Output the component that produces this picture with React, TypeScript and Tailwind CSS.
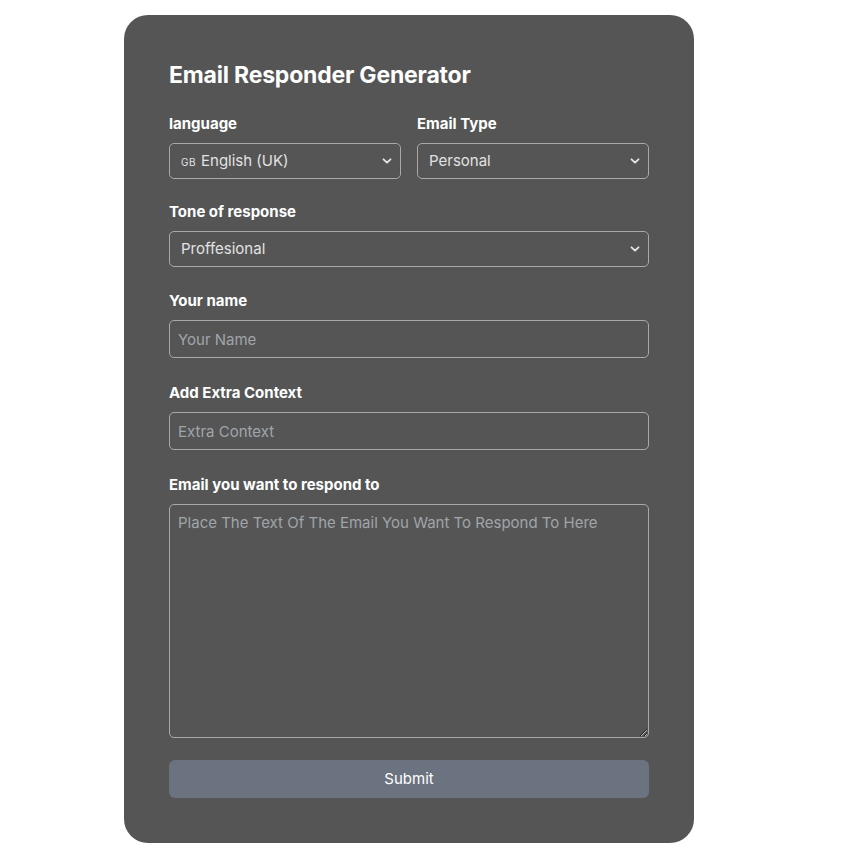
import React from "react";

const Chevron = () => (
  <svg className="pointer-events-none absolute right-[9px] top-1/2 -translate-y-1/2" width="10" height="7" viewBox="0 0 10 7" fill="none">
    <path d="M1.5 1.8 L5 5.2 L8.5 1.8" stroke="#e5e5e5" strokeWidth="1.8" strokeLinecap="round" strokeLinejoin="round" />
  </svg>
);

const labelCls = "block text-[15px] leading-5 font-bold text-white mb-[9px]";
const selectCls =
  "w-full h-9 appearance-none rounded-[5px] border border-[#a9a9a9] bg-[#555555] pl-[11px] pr-8 text-[15px] text-[#e2e2e2] outline-none";
const inputCls =
  "w-full h-[38px] rounded-[5px] border border-[#a9a9a9] bg-[#555555] px-2 text-[15px] text-[#e6e6e6] placeholder:text-[#a0a5aa] outline-none";

export default function App() {
  return (
    <div className="min-h-[860px] bg-white" style={{ fontFamily: "Inter, 'Noto Sans', sans-serif" }}>
      <div className="pt-[15px] pl-[124px]">
        <div className="w-[570px] h-[828px] rounded-[24px] bg-[#555555] px-[45px] pt-[44px]">
          <h1 className="text-[23px] leading-8 font-bold text-white tracking-[-0.2px] mb-[23px]">Email Responder Generator</h1>

          <div className="flex gap-4 mb-[23px]">
            <div className="flex-1">
              <label className={labelCls}>language</label>
              <div className="relative">
                <select className={selectCls} defaultValue="en">
                  <option value="en">🇬🇧 English (UK)</option>
                </select>
                <div className="pointer-events-none absolute inset-0 flex items-center pl-[11px] text-[15px] text-[#e2e2e2] bg-[#555555] rounded-[5px] m-px">
                  <span className="text-[10px] tracking-[0.5px] mr-[5px] mt-[2px]">GB</span>English (UK)
                </div>
                <Chevron />
              </div>
            </div>
            <div className="flex-1">
              <label className={labelCls}>Email Type</label>
              <div className="relative">
                <select className={selectCls} defaultValue="p">
                  <option value="p">Personal</option>
                </select>
                <Chevron />
              </div>
            </div>
          </div>

          <div className="mb-[24px]">
            <label className={labelCls}>Tone of response</label>
            <div className="relative">
              <select className={selectCls} defaultValue="p">
                <option value="p">Proffesional</option>
              </select>
              <Chevron />
            </div>
          </div>

          <div className="mb-[25px]">
            <label className={labelCls}>Your name</label>
            <input className={inputCls} placeholder="Your Name" />
          </div>

          <div className="mb-[25px]">
            <label className={labelCls}>Add Extra Context</label>
            <input className={inputCls} placeholder="Extra Context" />
          </div>

          <div className="mb-[22px]">
            <label className={labelCls}>Email you want to respond to</label>
            <textarea
              className="block w-full h-[234px] rounded-[5px] border border-[#a9a9a9] bg-[#555555] px-2 py-[8px] text-[15px] leading-5 text-[#e6e6e6] placeholder:text-[#a0a5aa] outline-none"
              placeholder="Place The Text Of The Email You Want To Respond To Here"
            />
          </div>

          <button className="w-full h-[38px] rounded-[6px] bg-[#6b7280] text-[15px] text-white">Submit</button>
        </div>
      </div>
    </div>
  );
}
